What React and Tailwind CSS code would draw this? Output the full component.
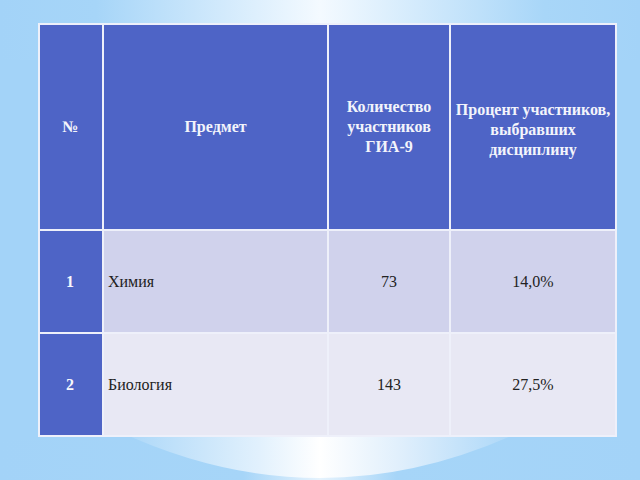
import React from 'react';

const Backdrop = () => (
  <svg className="absolute inset-0" width="640" height="480" viewBox="0 0 640 480">
    <defs>
      <linearGradient id="topGlow" x1="0" y1="0" x2="1" y2="0">
        <stop offset="0" stopColor="#a3d3f8" />
        <stop offset="0.15" stopColor="#a6d5f8" />
        <stop offset="0.5" stopColor="#f4faff" />
        <stop offset="0.85" stopColor="#a8d6f8" />
        <stop offset="1" stopColor="#a3d3f8" />
      </linearGradient>
      <linearGradient id="swoosh" x1="0" y1="0" x2="1" y2="0">
        <stop offset="0" stopColor="#a9d6f8" />
        <stop offset="0.35" stopColor="#e2f1fd" />
        <stop offset="0.5" stopColor="#ffffff" />
        <stop offset="0.7" stopColor="#e0effc" />
        <stop offset="1" stopColor="#a9d6f8" />
      </linearGradient>
      <linearGradient id="floor" x1="0" y1="0" x2="1" y2="0">
        <stop offset="0" stopColor="#a3d3f8" />
        <stop offset="0.38" stopColor="#a6d5f8" />
        <stop offset="0.5" stopColor="#e6f3fd" />
        <stop offset="0.62" stopColor="#a6d5f8" />
        <stop offset="1" stopColor="#a3d3f8" />
      </linearGradient>
    </defs>
    <rect width="640" height="480" fill="#a3d3f8" />
    <rect width="640" height="60" fill="url(#topGlow)" />
    <rect y="440" width="640" height="40" fill="url(#floor)" />
    <path d="M120 432 Q 320 524 520 432 Z" fill="url(#swoosh)" />
  </svg>
);

const head = 'bg-[#4e64c6] text-[#f3f4fb] font-bold text-[16px] leading-[20px] text-center flex items-center justify-center';
const num = 'bg-[#4e64c6] text-[#f7f7fc] font-bold text-[16px] flex items-center justify-center';
const cell = 'flex items-center text-[16px] text-[#222]';

const rows = [
  { n: '1', name: 'Химия', count: '73', pct: '14,0%', bg: 'bg-[#d0d2ec]' },
  { n: '2', name: 'Биология', count: '143', pct: '27,5%', bg: 'bg-[#e8e8f4]' },
];

export default function App() {
  return (
    <div className="relative w-[640px] h-[480px] overflow-hidden" style={{ fontFamily: '"Liberation Serif", serif' }}>
      <Backdrop />
      <div className="relative pt-[23px] pl-[38px]">
        <div className="grid grid-cols-[62px_223px_120px_164px] grid-rows-[204px_101px_101px] gap-[2px] p-[2px] bg-[#eef0fa] w-[579px]">
          <div className={`${head} pr-[2px]`}>№</div>
          <div className={head}>Предмет</div>
          <div className={head}>
            Количество<br />участников<br />ГИА-9
          </div>
          <div className={`${head} pt-[6px]`}>
            Процент участников,<br />выбравших<br />дисциплину
          </div>
          {rows.map((r) => (
            <React.Fragment key={r.n}>
              <div className={`${num} pr-[2px]`}>{r.n}</div>
              <div className={`${r.bg} ${cell} pl-[4px]`}>{r.name}</div>
              <div className={`${r.bg} ${cell} justify-center`}>{r.count}</div>
              <div className={`${r.bg} ${cell} justify-center`}>{r.pct}</div>
            </React.Fragment>
          ))}
        </div>
      </div>
    </div>
  );
}
